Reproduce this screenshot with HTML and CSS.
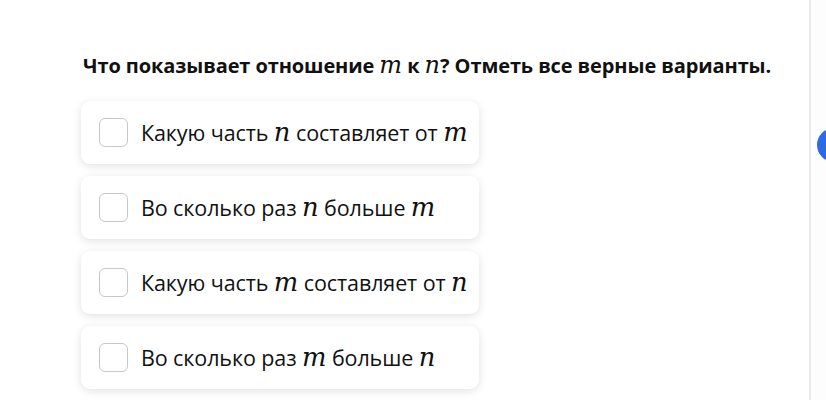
FILE: index.html
```html
<!DOCTYPE html>
<html lang="ru">
<head>
    <meta charset="UTF-8">
    <title>Задание</title>
    <link rel="stylesheet" href="styles.css">
</head>
<body>
    <div class="page">
        <main class="task">
            <h2 class="question">Что показывает отношение <span class="var">m</span> к <span class="var">n</span>? Отметь все верные варианты.</h2>

            <div class="options">
                <label class="option">
                    <span class="box"></span>
                    <span class="option-text">Какую часть <span class="var">n</span> составляет от <span class="var">m</span></span>
                </label>
                <label class="option">
                    <span class="box"></span>
                    <span class="option-text">Во сколько раз <span class="var">n</span> больше <span class="var">m</span></span>
                </label>
                <label class="option">
                    <span class="box"></span>
                    <span class="option-text">Какую часть <span class="var">m</span> составляет от <span class="var">n</span></span>
                </label>
                <label class="option">
                    <span class="box"></span>
                    <span class="option-text">Во сколько раз <span class="var">m</span> больше <span class="var">n</span></span>
                </label>
            </div>
        </main>

        <aside class="side">
            <span class="side-btn"></span>
        </aside>
    </div>
</body>
</html>
```

FILE: styles.css
```css
body {
    margin: 0;
    font-family: 'Open Sans', 'Noto Sans', sans-serif;
    color: #111;
    background-color: #fdfdfd;
    overflow: hidden;
}

.page {
    display: flex;
    height: 400px;
}

.task {
    width: 811px;
    flex-shrink: 0;
    background-color: #fff;
    border-right: 2px solid #e9e9ee;
    padding: 52px 0 0 83px;
    box-sizing: border-box;
}

.question {
    margin: 0;
    font-size: 20px;
    line-height: 28px;
    font-weight: 700;
    letter-spacing: -0.1px;
}

.var {
    font-family: 'DejaVu Serif', 'Liberation Serif', serif;
    font-style: italic;
    font-weight: 400;
    font-size: 1.2em;
    line-height: 1;
    letter-spacing: 0;
}

.options {
    display: flex;
    flex-direction: column;
    gap: 12px;
    width: 398px;
    margin: 21px 0 0 -2px;
}

.option {
    display: flex;
    align-items: center;
    gap: 13px;
    height: 63px;
    padding: 0 0 0 18px;
    background-color: #fff;
    border-radius: 9px;
    box-shadow: 0 2px 8px rgba(0, 0, 0, 0.12);
}

.box {
    width: 27px;
    height: 27px;
    border: 1.5px solid #c6c6cc;
    border-radius: 6px;
    flex-shrink: 0;
}

.option-text {
    font-size: 21.5px;
    letter-spacing: -0.1px;
}

.side {
    flex: 1;
    overflow: hidden;
    padding: 128px 0 0 6px;
}

.side-btn {
    display: block;
    width: 34px;
    height: 34px;
    border-radius: 50%;
    background-color: #2f6ae2;
}
```
